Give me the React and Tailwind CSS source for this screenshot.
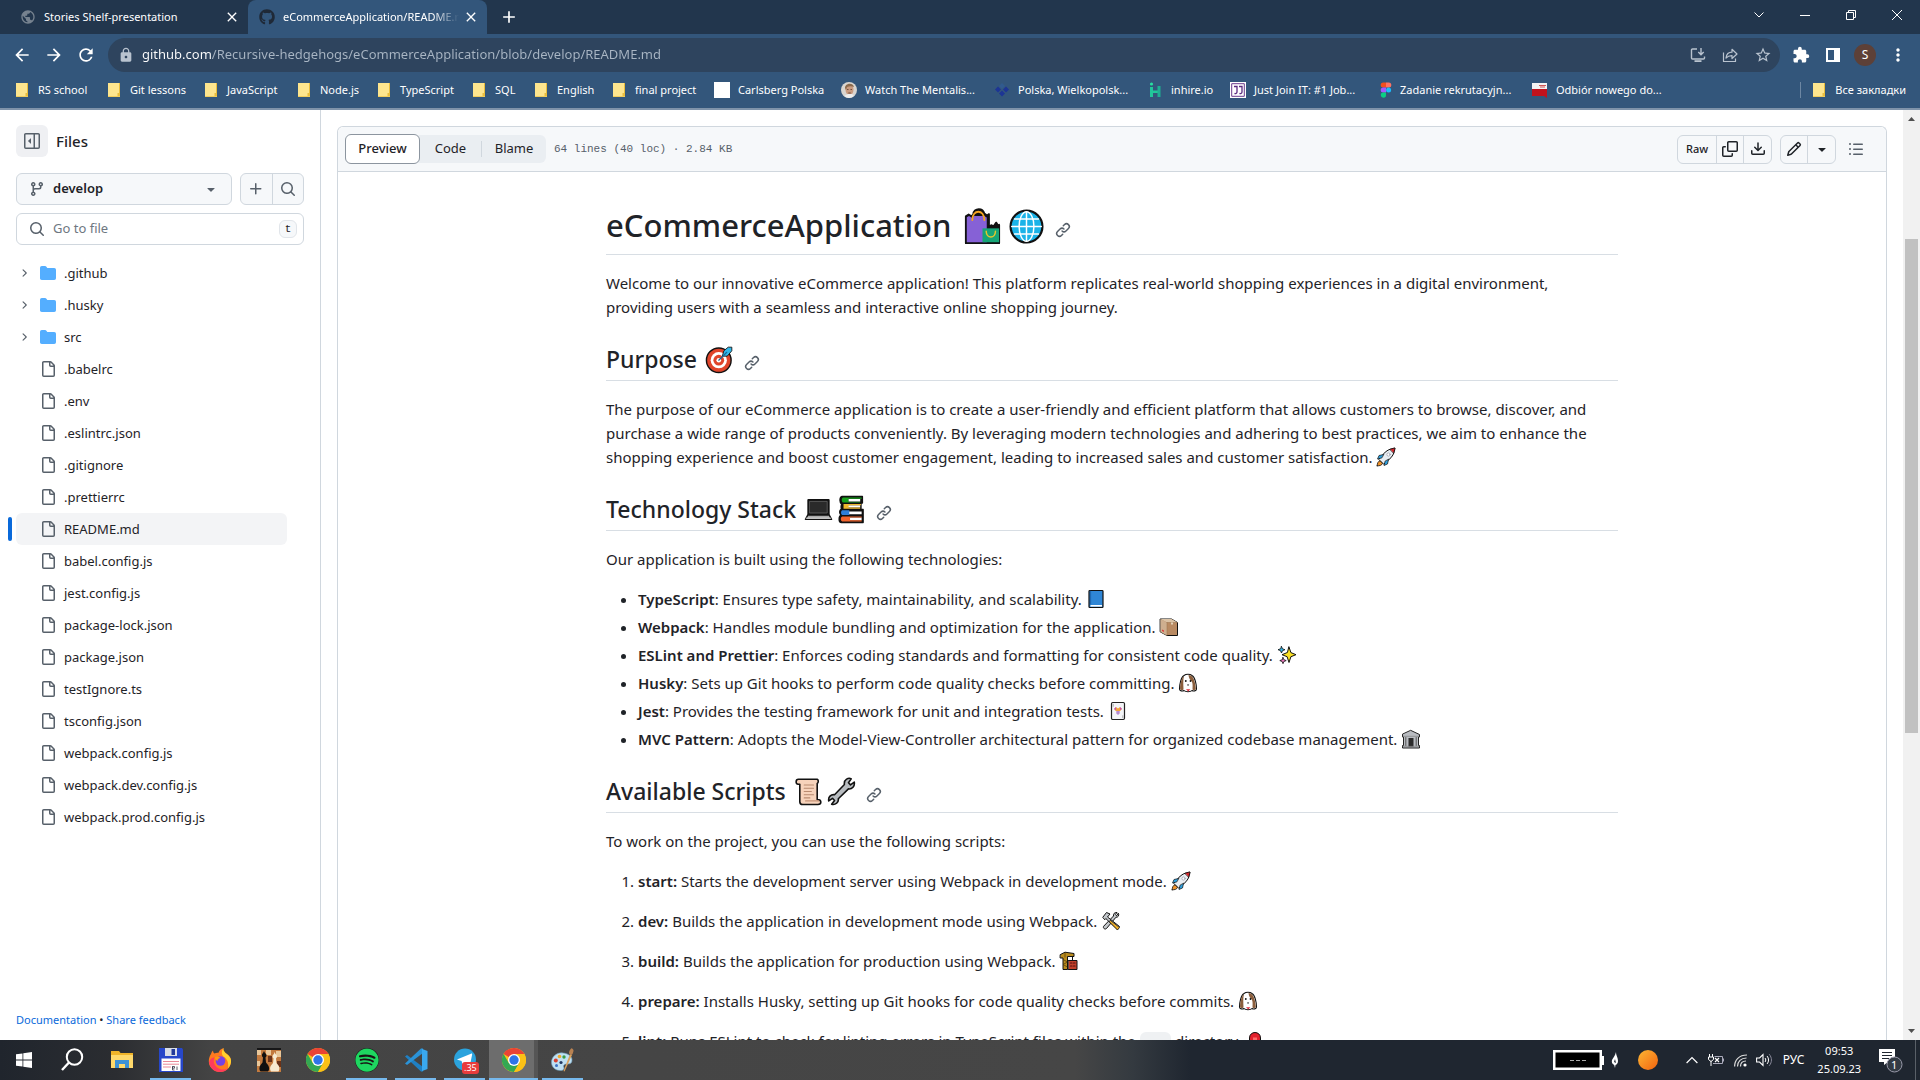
import React from "react";
import { MdArrowBack, MdArrowForward, MdRefresh, MdLock, MdStarBorder, MdExtension, MdMoreVert, MdAdd, MdClose, MdPublic } from "react-icons/md";
import { FaSpotify, FaGithub } from "react-icons/fa";

/* ---------- line icons of the repository pages, on a 16 x 16 grid ---------- */
const octicons = {
  file: "M2 1.750C2 .784 2.784 0 3.750 0h6.586c.464 0 .909.184 1.237.513l2.914 2.914c.329.328.513.773.513 1.237v9.586A1.750 1.750 0 0 1 13.250 16h-9.500A1.750 1.750 0 0 1 2 14.250Zm1.750-.250a.250.250 0 0 0-.250.250v12.500c0 .138.112.250.250.250h9.500a.250.250 0 0 0 .250-.250V6h-2.750A1.750 1.750 0 0 1 9 4.250V1.500Zm6.750.062V4.250c0 .138.112.250.250.250h2.688l-.011-.013-2.914-2.914-.013-.011Z",
  folder: "M1.750 1A1.750 1.750 0 0 0 0 2.750v10.500C0 14.216.784 15 1.750 15h12.500A1.750 1.750 0 0 0 16 13.250v-8.500A1.750 1.750 0 0 0 14.250 3H7.500a.250.250 0 0 1-.2-.1l-.9-1.2C6.070 1.260 5.550 1 5 1H1.750Z",
  branch: "M9.5 3.25a2.25 2.25 0 1 1 3 2.122V6A2.5 2.5 0 0 1 10 8.5H6a1 1 0 0 0-1 1v1.128a2.251 2.251 0 1 1-1.5 0V5.372a2.25 2.25 0 1 1 1.5 0v1.836A2.493 2.493 0 0 1 6 7h4a1 1 0 0 0 1-1v-.628A2.25 2.25 0 0 1 9.5 3.25Zm-6 0a.75.75 0 1 0 1.5 0 .75.75 0 0 0-1.5 0Zm8.25-.75a.75.75 0 1 0 0 1.5.75.75 0 0 0 0-1.5ZM4.25 12a.75.75 0 1 0 0 1.5.75.75 0 0 0 0-1.5Z",
  search: "M10.68 11.74a6 6 0 0 1-7.922-8.982 6 6 0 0 1 8.982 7.922l3.04 3.04a.749.749 0 0 1-.326 1.275.749.749 0 0 1-.734-.215ZM11.5 7a4.499 4.499 0 1 0-8.997 0A4.499 4.499 0 0 0 11.5 7Z",
  plus: "M7.75 2a.75.75 0 0 1 .75.75V7h4.25a.75.75 0 0 1 0 1.5H8.5v4.25a.75.75 0 0 1-1.5 0V8.5H2.75a.75.75 0 0 1 0-1.5H7V2.75A.75.75 0 0 1 7.75 2Z",
  triangle: "m4.427 7.427 3.396 3.396a.25.25 0 0 0 .354 0l3.396-3.396A.25.25 0 0 0 11.396 7H4.604a.25.25 0 0 0-.177.427Z",
  sidebar: "m4.177 7.823 2.396-2.396A.25.25 0 0 1 7 5.604v4.792a.25.25 0 0 1-.427.177L4.177 8.177a.25.25 0 0 1 0-.354ZM0 1.75C0 .784.784 0 1.75 0h12.5C15.216 0 16 .784 16 1.75v12.5A1.75 1.75 0 0 1 14.25 16H1.75A1.75 1.75 0 0 1 0 14.25Zm1.75-.25a.25.25 0 0 0-.25.25v12.5c0 .138.112.25.25.25H9.5v-13Zm12.5 13a.25.25 0 0 0 .25-.25V1.75a.25.25 0 0 0-.25-.25H11v13Z",
  copy: "M0 6.75C0 5.784.784 5 1.75 5h1.5a.75.75 0 0 1 0 1.5h-1.5a.25.25 0 0 0-.25.25v7.5c0 .138.112.25.25.25h7.5a.25.25 0 0 0 .25-.25v-1.5a.75.75 0 0 1 1.5 0v1.5A1.75 1.75 0 0 1 9.25 16h-7.5A1.75 1.75 0 0 1 0 14.25ZM5 1.75C5 .784 5.784 0 6.75 0h7.5C15.216 0 16 .784 16 1.75v7.5A1.75 1.75 0 0 1 14.25 11h-7.5A1.75 1.75 0 0 1 5 9.25Zm1.75-.25a.25.25 0 0 0-.25.25v7.5c0 .138.112.25.25.25h7.5a.25.25 0 0 0 .25-.25v-7.5a.25.25 0 0 0-.25-.25Z",
  download: "M2.75 14A1.75 1.75 0 0 1 1 12.25v-2.5a.75.75 0 0 1 1.5 0v2.5c0 .138.112.25.25.25h10.5a.25.25 0 0 0 .25-.25v-2.5a.75.75 0 0 1 1.5 0v2.5A1.75 1.75 0 0 1 13.25 14ZM7.25 7.689V2a.75.75 0 0 1 1.5 0v5.689l1.97-1.969a.749.749 0 1 1 1.06 1.06l-3.25 3.25a.749.749 0 0 1-1.06 0L4.22 6.78a.749.749 0 1 1 1.06-1.06l1.97 1.969Z",
  pencil: "M11.013 1.427a1.75 1.75 0 0 1 2.474 0l1.086 1.086a1.75 1.75 0 0 1 0 2.474l-8.61 8.61c-.21.21-.47.364-.756.445l-3.251.93a.75.75 0 0 1-.927-.928l.929-3.25c.081-.286.235-.547.445-.758l8.61-8.61Zm.176 4.823L9.75 4.81l-6.286 6.287a.253.253 0 0 0-.064.108l-.558 1.953 1.953-.558a.253.253 0 0 0 .108-.064Zm1.238-3.763a.25.25 0 0 0-.354 0L10.811 3.75l1.439 1.44 1.263-1.263a.25.25 0 0 0 0-.354Z",
  list: "M5.75 2.5h8.5a.75.75 0 0 1 0 1.5h-8.5a.75.75 0 0 1 0-1.5Zm0 5h8.5a.75.75 0 0 1 0 1.5h-8.5a.75.75 0 0 1 0-1.5Zm0 5h8.5a.75.75 0 0 1 0 1.5h-8.5a.75.75 0 0 1 0-1.5ZM2 14a1 1 0 1 1 0-2 1 1 0 0 1 0 2Zm1-6a1 1 0 1 1-2 0 1 1 0 0 1 2 0ZM2 4a1 1 0 1 1 0-2 1 1 0 0 1 0 2Z",
  link: "m7.775 3.275 1.25-1.25a3.5 3.5 0 1 1 4.95 4.95l-2.5 2.5a3.5 3.5 0 0 1-4.95 0 .751.751 0 0 1 .018-1.042.751.751 0 0 1 1.042-.018 1.998 1.998 0 0 0 2.83 0l2.5-2.5a2.002 2.002 0 0 0-2.83-2.83l-1.25 1.25a.751.751 0 0 1-1.042-.018.751.751 0 0 1-.018-1.042Zm-4.69 9.64a1.998 1.998 0 0 0 2.83 0l1.25-1.25a.751.751 0 0 1 1.042.018.751.751 0 0 1 .018 1.042l-1.25 1.25a3.5 3.5 0 1 1-4.95-4.95l2.5-2.5a3.5 3.5 0 0 1 4.95 0 .751.751 0 0 1-.018 1.042.751.751 0 0 1-1.042.018 1.998 1.998 0 0 0-2.83 0l-2.5 2.5a1.998 1.998 0 0 0 0 2.83Z",
  chevron: "M6.22 3.22a.75.75 0 0 1 1.06 0l4.25 4.25a.75.75 0 0 1 0 1.06l-4.25 4.25a.751.751 0 0 1-1.06-1.06L9.94 8 6.22 4.28a.75.75 0 0 1 0-1.06Z",
};

const Oct = ({ name, cls = "h-4 w-4" }) => (
  <svg viewBox="0 0 16 16" className={`shrink-0 ${cls}`} fill="currentColor" aria-hidden="true"><path d={octicons[name]} /></svg>
);

/* ---------- emoji drawings, all on a 20 x 20 grid ---------- */
const emojiShapes = {
  bags: (
    <>
      <path d="M1 19V4.5l1.5-1 1.5 1 1-1C5 1.500 6.500.6 8 .6s2.600.8 3 2.400l1.500 1 1-.7v7l1.200-1 1.300.6 1.400-2 1 1.500.6-.3V19z" fill="#111" stroke="#111" />
      <path d="M1.500 18.500V5l1.200-.7 1.500 1 1.300-1h5.500l1.300.8V18.500z" fill="#8661d6" stroke="none" />
      <path d="M4.500 6.500c0-6 6.500-6 6.500 0" fill="none" stroke="#f5a623" />
      <path d="M10 11h9v7.500h-9z" fill="#16a576" stroke="none" />
      <path d="M12 12.500c0 4.200 5 4.200 5 0" fill="none" stroke="#e6c62c" strokeWidth=".8" />
    </>
  ),
  globe: (
    <>
      <circle cx="10" cy="10" r="8.600" fill="#1ab3e8" stroke="#111" strokeWidth="1.200" />
      <path d="M10 2v16M2 10h16M3.500 6h13M3.500 14h13" fill="none" stroke="#fff" strokeWidth=".8" />
      <ellipse cx="10" cy="10" rx="4" ry="8" fill="none" stroke="#fff" strokeWidth=".8" />
    </>
  ),
  dart: (
    <>
      <circle cx="9.500" cy="10.500" r="8.500" fill="#e0452b" stroke="#111" />
      <circle cx="9.500" cy="10.500" r="5.600" fill="#fff" stroke="none" />
      <circle cx="9.500" cy="10.500" r="3.700" fill="#e0452b" stroke="none" />
      <circle cx="9.500" cy="10.500" r="1.600" fill="#fff" stroke="none" />
      <path d="M12 7.500l1-3.500L16 1.500h2.500V4l-3 3.500z" fill="#31b8ea" stroke="#111" strokeWidth=".6" />
      <path d="M9.500 10.500l5.500-5.500" fill="none" stroke="#18699a" strokeWidth=".8" />
    </>
  ),
  laptop: (
    <>
      <path d="M3 3.500h14v10H3z" fill="#222" stroke="#111" strokeWidth="1.400" />
      <path d="M4 4.400h12v8H4z" fill="#2a2a2a" stroke="#666" strokeWidth=".5" />
      <path d="M2.600 13.800h14.800l1.600 3H1z" fill="#aaa" stroke="#111" />
      <path d="M1.500 16h17" stroke="#eee" strokeWidth=".6" />
    </>
  ),
  books: (
    <>
      <path d="M3.500 1h14v4.500h-1V10h1.500v4.500L18 19H3c-2 0-2-4.500 0-5-1.500-1-1.500-3.500 0-4.300 0-1-.5-2 .3-3.200C1.500 5 1.800 1.500 3.500 1z" fill="#111" stroke="#111" />
      <path d="M4 1.800h13v.8H8v2h8v.6H4c-1-.6-1-2.800 0-3.400z" fill="#16a11d" stroke="none" />
      <path d="M8 2.800h8v1.600H8zM7 7h9v1.700H7zM8 11.400h9v1.800H8zM8 15.600h9v1.800H8z" fill="#fff" stroke="none" />
      <path d="M4.500 6.200h12V7H8v1.700h8v.7H4.500z" fill="#f0b82e" stroke="none" />
      <path d="M3.500 10.500h5v3.300h-5c-1-.6-1-2.700 0-3.300z" fill="#2f7fd8" stroke="none" />
      <path d="M3.500 14.800H17v.8H9v1.800h8v.8H3.500c-1.200-.6-1.200-2.800 0-3.400z" fill="#f2642c" stroke="none" />
    </>
  ),
  rocket: (
    <>
      <path d="M3 12l4-4.500C9.500 4 14 1.500 19 1c-.3 5-3 9.500-6.500 12L8 17z" fill="#e8edf2" stroke="#111" />
      <path d="M14 2.300L19 1l-1.300 5z" fill="#d8262c" stroke="#111" strokeWidth=".6" />
      <path d="M7.500 7.500L3 8.500 1.500 12l4-1zM12.500 12.500l-1 4.500L8 18.500l1-4z" fill="#2b9fdd" stroke="#111" strokeWidth=".7" />
      <circle cx="12.500" cy="7.500" r="1.600" fill="#fff" stroke="#889" strokeWidth=".6" />
      <path d="M1.200 18.800c0-2.500.8-4.500 2.800-5l2.500 2.500c-.5 2-2.800 2.700-5.300 2.500z" fill="#f0932b" stroke="#111" strokeWidth=".8" />
    </>
  ),
  book: (
    <>
      <rect x="3" y="1.500" width="14" height="17" rx=".8" fill="#2f86d6" stroke="#111" strokeWidth="1.200" />
      <path d="M4.500 16h11.500v1.600H4.500z" fill="#fff" stroke="none" />
      <path d="M4.600 2.200v13" stroke="#1d64ae" />
    </>
  ),
  package: (
    <>
      <path d="M1.500 2h11l6 3.500v13H8L1.500 15z" fill="#b98a62" stroke="#111" />
      <path d="M1.500 2h11l6 3.500H8z" fill="#dbc3a6" stroke="none" />
      <path d="M1.500 2L8 5.500V18.500L1.500 15z" fill="#ceaf8f" stroke="none" />
      <path d="M8 5.500h10.500M8 5.500v13" stroke="#96704e" strokeWidth=".5" />
      <path d="M12 5.500h2v2h-2z" fill="#e6d3b9" stroke="none" />
      <path d="M3 12.500l2 1v1.500l-2-1z" fill="#e03a3a" stroke="none" />
    </>
  ),
  sparkles: (
    <>
      <path d="M12 2l1.900 5.600L19 9.700l-5.100 2L12 17.500l-1.900-5.800L5 9.700l5.100-2.100z" fill="#fbe122" stroke="#111" />
      <path d="M4.500 1.500l1 2.300L8 4.700l-2.500 1-1 2.300-1-2.300L1 4.700l2.500-.9z" fill="#35b4e4" stroke="#111" strokeWidth=".8" />
      <path d="M6 12.500l.9 2.200 2.300.9-2.300.9L6 18.700l-.9-2.200-2.300-.9 2.300-.9z" fill="#ec77bd" stroke="#111" strokeWidth=".8" />
    </>
  ),
  dog: (
    <>
      <path d="M6 2.500c2-1.600 6-1.600 8 0 3 1.500 4.500 9 4.500 13.500 0 2-3 2.500-4.500 1.500-1.500 1.700-6.500 1.700-8 0-1.500 1-4.500.5-4.500-1.500C1.500 11.500 3 4 6 2.500z" fill="#fff" stroke="#111" strokeWidth="1.100" />
      <path d="M6 3C3.500 5 2 11 2.100 16c.5 1.300 2.600 1.300 3.400.5C5.300 11 5 7 6 3zM10.500 2c4 0 6.500 4 7.300 14-.5 1.300-2.600 1.300-3.300.5.2-4 .3-6-.7-8-1.600-1-3-3.500-3.300-6.500z" fill="#8b5e3c" stroke="none" />
      <circle cx="7.800" cy="8" r=".9" fill="#111" stroke="none" />
      <circle cx="12.500" cy="8" r=".9" fill="#111" stroke="none" />
      <path d="M9 11.500h2.200L10 13z" fill="#111" stroke="none" />
      <path d="M8 16.300h4.300l-2 2.200z" fill="#e02a3a" stroke="none" />
    </>
  ),
  joker: (
    <>
      <rect x="3.500" y="1.500" width="13" height="17" rx="1.200" fill="#f4f5f8" stroke="#222" strokeWidth="1.200" />
      <path d="M6 8l2-2 2 1.500L12 6l2 2-1.800 2H7.800z" fill="#f3a33c" stroke="none" />
      <path d="M6 8l2-2v3zM12 6l2 2-2 1z" fill="#c34bb4" stroke="none" />
      <path d="M8.300 10h3.400v2.500L10 14l-1.700-1.500z" fill="#b58ad0" stroke="none" />
      <path d="M5.200 3.300v2M14.800 14.700v2" stroke="#999" strokeWidth=".8" />
    </>
  ),
  bank: (
    <>
      <path d="M10 1.500l8.500 4V8h-1v8.500h1V19h-17v-2.500h1V8h-1V5.500z" fill="#b9bcc1" stroke="#222" />
      <path d="M7.500 9h5v8.500h-5z" fill="#2b2b2b" stroke="none" />
      <path d="M4.800 8.500v8M15.200 8.500v8" stroke="#555" strokeWidth="1" />
      <path d="M2 7.300h16M2 17.300h16" stroke="#777" strokeWidth=".6" />
    </>
  ),
  scroll: (
    <>
      <path d="M3 1.500h13c1 .5 1 2.500 0 3v11c1.500 0 2.500.5 2.500 1.800S17.500 19 16.500 19H6c-1.500 0-2-1-2-2V5H2.800C1 5 1 1.500 3 1.500z" fill="#f7d3bb" stroke="#111" strokeWidth="1.100" />
      <path d="M7 5.500h6.500M7 7.800h6.500M7 10h5M7 12.200h6.500M7 14.400h4" stroke="#b98b70" strokeWidth=".7" />
      <path d="M8 16.500h9" stroke="#c69377" strokeWidth=".9" />
    </>
  ),
  wrench: (
    <path d="M13.500 1.500c1-.7 2.500-.7 3.200-.2L14.800 4l1.400 1.400 2.600-1.900c.5 3-1.500 5-4 4.700l-7 6.800c.4 2.500-2 4.500-4.600 3.800l2-2.600L3.800 14.700 1.200 16.500c-.5-2.700 1.500-4.600 4-4.300l6.800-7c-.2-1.400.3-2.900 1.500-3.700z" fill="#b8bcc0" stroke="#111" strokeWidth="1.100" />
  ),
  tools: (
    <>
      <path d="M17.500 2.500c1 2-.5 4-2.500 3.700L5.500 17.500c-1.500 1.500-4-.5-2.800-2.300L12.500 5c-.5-2 1-3.800 3.500-3.500l-1.700 2 1 1z" fill="#c4c8cc" stroke="#111" />
      <path d="M2 6l3.500-4.500L9 3 6.500 6l12 9.500-2.300 2.800L4.800 7.500 4 8.500z" fill="#c4c8cc" stroke="#111" />
      <path d="M9.500 9.500l9 7-2 2.500-8-8z" fill="#f0b02a" stroke="#111" strokeWidth=".8" />
    </>
  ),
  crane: (
    <>
      <path d="M1.500 3.500L6 1.200l9 1.300v3H8.500v13H4V7H1.500z" fill="#b98b1d" stroke="#111" />
      <path d="M4 8.500l4.500 2.500L4 13.500 8.500 16M6 2v4" fill="none" stroke="#4e3808" strokeWidth=".7" />
      <path d="M13.500 5.500v4" stroke="#111" />
      <path d="M9.500 9.500h8.500v9H9.500z" fill="#c2402a" stroke="#111" />
      <path d="M11.500 12h1.500M14.500 12H16M11.500 15h1.500M14.500 15H16" stroke="#511" strokeWidth="1.200" />
    </>
  ),
  siren: (
    <>
      <path d="M4.500 15V7c0-7.300 11-7.300 11 0v8z" fill="#e3202c" stroke="#111" />
      <path d="M8 6.500h4V13H8z" fill="#fb6a6a" stroke="none" />
      <path d="M2.500 15h15v3.500h-15z" fill="#555" stroke="#111" />
    </>
  ),
};

function Emoji({ name, size = "text" }) {
  const cls =
    size === "h1" ? "mt-1 h-[37px] w-[37px]"
    : size === "h2" ? "mt-0.5 h-[29px] w-[29px]"
    : "h-5 w-5 align-[-4px]";
  return (
    <svg viewBox="0 0 20 20" className={`inline-block ${cls}`} strokeLinejoin="round" strokeLinecap="round" aria-hidden="true">
      {emojiShapes[name]}
    </svg>
  );
}

/* ---------- browser chrome ---------- */
function FolderMark() {
  return (
    <svg viewBox="0 0 12 14" className="h-3.5 w-3 shrink-0" aria-hidden="true">
      <path d="M0 0h12v14H0z" fill="#fde58e" />
      <path d="M11 0h1v14H9.500v-4H11z" fill="#e9bd3d" />
      <path d="M0 13h12v1H0z" fill="#f1cd5c" />
    </svg>
  );
}

const Blank = () => <span className="block h-4 w-4 bg-white" />;
const Face = () => (
  <svg viewBox="0 0 16 16" className="h-4 w-4" aria-hidden="true">
    <circle cx="8" cy="8" r="8" fill="#d9d5d0" />
    <ellipse cx="8.500" cy="7.500" rx="4" ry="5.500" fill="#c99b80" />
    <path d="M4 6c0-5 8-6 9-1-2-1-5-1-7 0l-1 3z" fill="#8a6a4d" />
    <path d="M6 7.500h1.500M9.500 7.500H11M7.300 11h2.500" stroke="#5d3b2c" strokeWidth=".8" />
    <path d="M3 14l4-2h4l2 2a8 8 0 0 1-10 0z" fill="#eee" />
  </svg>
);
const Diamonds = () => (
  <svg viewBox="0 0 16 16" className="h-4 w-4" aria-hidden="true">
    <path d="M8 1l3 3-3 3-3-3z" fill="#315a8e" />
    <path d="M4 4.500l3 3-3 3-3-3zM12 4.500l3 3-3 3-3-3zM8 8.500l3 3-3 3-3-3z" fill="#1d3595" />
  </svg>
);
const InHire = () => (
  <svg viewBox="0 0 16 16" className="h-4 w-4" aria-hidden="true">
    <circle cx="4.500" cy="2" r="1.600" fill="#27e0a0" />
    <path d="M3 5h3v10H3zM6 8.500h5v2.500H6z" fill="#21c79a" />
    <path d="M10.500 4h3v11h-3z" fill="#1fae93" />
  </svg>
);
const JustJoin = () => (
  <svg viewBox="0 0 16 16" className="h-4 w-4" aria-hidden="true">
    <path d="M0 0h16v16H0z" fill="#fff" />
    <path d="M1.700 1.700h12.600v12.600H1.700z" fill="none" stroke="#6a3a8c" />
    <path d="M4 4.500h3v5.500c0 1.500-1.500 1.800-2.500 1.300M9 4.500h3v5.500c0 1.500-1.500 1.800-2.500 1.300" fill="none" stroke="#5b2a80" strokeWidth="1.300" />
  </svg>
);
const Figma = () => (
  <svg viewBox="0 0 12 16" className="h-4 w-3" aria-hidden="true">
    <path d="M3.200.5H6v5H3.200a2.500 2.500 0 0 1 0-5z" fill="#f24e1e" />
    <path d="M6 .5h2.800a2.500 2.500 0 0 1 0 5H6z" fill="#ff7262" />
    <path d="M3.200 5.500H6v5H3.200a2.500 2.500 0 0 1 0-5z" fill="#a259ff" />
    <circle cx="8.600" cy="8" r="2.500" fill="#1abcfe" />
    <path d="M3.200 10.500H6V13a2.600 2.600 0 1 1-2.800-2.500z" fill="#0acf83" />
  </svg>
);
const RedFlag = () => (
  <svg viewBox="0 0 16 16" className="h-4 w-4" aria-hidden="true">
    <path d="M0 1h15v7H0z" fill="#f4f2f2" />
    <path d="M0 7h15v9l-3-2H0z" fill="#c1121c" />
    <path d="M7 3.500h7M8 5h5" stroke="#c44" strokeWidth=".9" />
  </svg>
);

const bookmarks = [
  { label: "RS school", w: "w-[92px]" },
  { label: "Git lessons", w: "w-[97px]" },
  { label: "JavaScript", w: "w-[93px]" },
  { label: "Node.js", w: "w-[80px]" },
  { label: "TypeScript", w: "w-[95px]" },
  { label: "SQL", w: "w-[62px]" },
  { label: "English", w: "w-[78px]" },
  { label: "final project", w: "w-[101px]" },
  { label: "Carlsberg Polska", w: "w-[127px]", icon: <Blank /> },
  { label: "Watch The Mentalis...", w: "w-[153px]", icon: <Face /> },
  { label: "Polska, Wielkopolsk...", w: "w-[153px]", icon: <Diamonds /> },
  { label: "inhire.io", w: "w-[83px]", icon: <InHire /> },
  { label: "Just Join IT: #1 Job...", w: "w-[150px]", icon: <JustJoin /> },
  { label: "Zadanie rekrutacyjn...", w: "w-[152px]", icon: <Figma /> },
  { label: "Odbiór nowego do...", w: "w-[140px]", icon: <RedFlag /> },
];

function TabStrip() {
  return (
    <div className="flex h-[34px] bg-[#22364d] text-[11px]">
      <div className="flex w-[248px] items-center pl-5">
        <MdPublic className="h-4 w-4 text-[#76828f]" aria-hidden="true" />
        <span className="ml-2 flex-1 truncate text-white">Stories Shelf-presentation</span>
        <button aria-label="Close tab" className="mr-2 text-white"><MdClose className="h-4 w-4" /></button>
      </div>
      <div className="flex w-[239px] items-center rounded-t-lg bg-[#33567b] pl-[11px]">
        <FaGithub className="h-4 w-4 shrink-0 text-[#1f2937]" aria-hidden="true" />
        <span className="ml-2 min-w-0 flex-1 overflow-hidden whitespace-nowrap text-white [mask-image:linear-gradient(to_right,black_85%,transparent)]">
          eCommerceApplication/README.md
        </span>
        <button aria-label="Close tab" className="mr-2 ml-1 text-white"><MdClose className="h-4 w-4" /></button>
      </div>
      <button aria-label="New tab" className="ml-3 text-white"><MdAdd className="h-5 w-5" /></button>
      <div className="ml-auto flex items-center pb-1 text-white">
        <button aria-label="Search tabs" className="flex w-[46px] justify-center">
          <svg viewBox="0 0 10 10" className="h-2.5 w-2.5" fill="none" stroke="currentColor"><path d="M.5 2.500L5 7l4.500-4.500" /></svg>
        </button>
        <button aria-label="Minimize" className="flex w-[46px] justify-center">
          <svg viewBox="0 0 10 10" className="h-2.5 w-2.5" fill="none" stroke="currentColor"><path d="M0 5.500h10" /></svg>
        </button>
        <button aria-label="Restore" className="flex w-[46px] justify-center">
          <svg viewBox="0 0 10 10" className="h-2.5 w-2.5" fill="none" stroke="currentColor"><path d="M.5 2.500h7v7h-7zM2.500 2.500v-2h7v7h-2" /></svg>
        </button>
        <button aria-label="Close window" className="flex w-[46px] justify-center">
          <svg viewBox="0 0 10 10" className="h-2.5 w-2.5" fill="none" stroke="currentColor"><path d="M0 0l10 10M10 0L0 10" /></svg>
        </button>
      </div>
    </div>
  );
}

function Toolbar() {
  return (
    <div className="flex h-[42px] items-center bg-[#33567b] px-3 text-white">
      <button aria-label="Back" className="w-8"><MdArrowBack className="h-5 w-5" /></button>
      <button aria-label="Forward" className="w-8"><MdArrowForward className="h-5 w-5" /></button>
      <button aria-label="Reload" className="w-8"><MdRefresh className="h-5 w-5" /></button>
      <div className="flex h-[34px] flex-1 items-center gap-2 rounded-full bg-[#2e445e] pr-2 pl-2.5 text-[#b9c3cf]">
        <MdLock className="h-4 w-4" aria-hidden="true" />
        <input
          aria-label="Address"
          defaultValue="github.com/Recursive-hedgehogs/eCommerceApplication/blob/develop/README.md"
          className="min-w-0 flex-1 bg-linear-to-r from-white from-[69px] to-[#a9b6c4] to-[69px] bg-clip-text text-[13px] text-transparent outline-none"
        />
        <div className="flex items-center gap-4">
          <button aria-label="Install app">
            <svg viewBox="0 0 16 16" className="h-4 w-4" fill="none" stroke="currentColor" strokeWidth="1.400">
              <path d="M7 2H2.500a1 1 0 0 0-1 1v8a1 1 0 0 0 1 1h11a1 1 0 0 0 1-1V9.500M11 1v6.500M8.300 5L11 7.800 13.700 5" />
              <path d="M4.500 13.200h7V15h-7z" fill="currentColor" stroke="none" />
            </svg>
          </button>
          <button aria-label="Share">
            <svg viewBox="0 0 16 16" className="h-4 w-4" fill="none" stroke="currentColor" strokeWidth="1.200" strokeLinejoin="round">
              <path d="M1.500 5.500v9h12v-3M4 11c.5-4 3-5.800 6-5.800V2.300L15 7l-5 4.500V8.600C7.500 8.600 5.500 9.300 4 11z" />
            </svg>
          </button>
          <button aria-label="Bookmark this page"><MdStarBorder className="h-[18px] w-[18px]" /></button>
        </div>
      </div>
      <button aria-label="Extensions" className="ml-3"><MdExtension className="h-[18px] w-[18px]" /></button>
      <button aria-label="Side panel" className="ml-4">
        <svg viewBox="0 0 14 14" className="h-3.5 w-3.5"><path d="M0 0h14v14H0zM2 2v10h6V2z" fill="currentColor" fillRule="evenodd" /></svg>
      </button>
      <button aria-label="Profile" className="ml-3.5 h-[22px] w-[22px] rounded-full bg-[#5d4037] text-[12px]">S</button>
      <button aria-label="Menu" className="ml-3"><MdMoreVert className="h-5 w-5" /></button>
    </div>
  );
}

function Bookmarks() {
  return (
    <nav aria-label="Bookmarks" className="flex h-[34px] items-center border-b-2 border-[#7f93aa] bg-[#33567b] pr-3.5 pb-1 pl-4 text-[11px] text-white">
      {bookmarks.map((b) => (
        <a key={b.label} href="#" className={`flex shrink-0 items-center whitespace-nowrap ${b.w} ${b.icon ? "gap-2" : "gap-2.5"}`}>
          {b.icon || <FolderMark />}
          <span>{b.label}</span>
        </a>
      ))}
      <a href="#" className="ml-auto flex items-center gap-2.5 whitespace-nowrap border-l border-[#6d87a3] pl-3">
        <FolderMark />
        <span>Все закладки</span>
      </a>
    </nav>
  );
}

/* ---------- repository sidebar ---------- */
const tree = [
  ".github", ".husky", "src", ".babelrc", ".env", ".eslintrc.json", ".gitignore", ".prettierrc", "README.md",
  "babel.config.js", "jest.config.js", "package-lock.json", "package.json", "testIgnore.ts", "tsconfig.json",
  "webpack.config.js", "webpack.dev.config.js", "webpack.prod.config.js",
];

function Sidebar() {
  return (
    <aside className="flex w-[321px] shrink-0 flex-col border-r border-[#d0d7de] px-4 pt-[15px] text-[13px] text-[#1f2328]">
      <div className="flex items-center gap-2">
        <button aria-label="Collapse file tree" className="flex h-8 w-8 items-center justify-center rounded-md bg-[#eff0f3] text-[#57606a]">
          <Oct name="sidebar" />
        </button>
        <h2 className="text-[15px] font-medium">Files</h2>
      </div>
      <div className="mt-4 flex gap-2">
        <button className="flex h-8 flex-1 items-center rounded-md border border-[#d0d7de] bg-[#f6f8fa] px-3">
          <Oct name="branch" cls="h-4 w-4 text-[#57606a]" />
          <span className="ml-2 font-semibold">develop</span>
          <Oct name="triangle" cls="ml-auto h-4 w-4 text-[#57606a]" />
        </button>
        <div className="flex h-8 w-16 divide-x divide-[#d0d7de] rounded-md border border-[#d0d7de] bg-[#f6f8fa] text-[#57606a]">
          <button aria-label="Add file" className="flex flex-1 items-center justify-center"><Oct name="plus" /></button>
          <button aria-label="Search this repository" className="flex flex-1 items-center justify-center"><Oct name="search" /></button>
        </div>
      </div>
      <label className="mt-2 flex h-8 items-center gap-2 rounded-md border border-[#d0d7de] pr-1.5 pl-3">
        <Oct name="search" cls="h-4 w-4 text-[#57606a]" />
        <input aria-label="Go to file" placeholder="Go to file" className="min-w-0 flex-1 outline-none placeholder:text-[#6e7781]" />
        <kbd className="flex h-[18px] w-[18px] items-center justify-center rounded-md border border-[#e1e5ea] bg-[#f6f8fa] font-['Liberation_Mono',monospace] text-[11px]">t</kbd>
      </label>
      <ul className="mt-3 mr-[17px]">
        {tree.map((name, i) => (
          <li key={name} className="relative">
            {name === "README.md" && <span className="absolute top-1 -left-2 h-6 w-1 rounded-full bg-[#0969da]" />}
            <a href="#" className={`flex h-8 items-center rounded-md ${name === "README.md" ? "bg-[#f3f4f6]" : ""}`}>
              <span className="flex w-6 items-center text-[#57606a]">
                {i < 3 && <Oct name="chevron" cls="ml-0.5 h-3 w-3" />}
              </span>
              {i < 3 ? <Oct name="folder" cls="h-4 w-4 text-[#54aeff]" /> : <Oct name="file" cls="h-4 w-4 text-[#57606a]" />}
              <span className="ml-2 pt-px">{name}</span>
            </a>
          </li>
        ))}
      </ul>
      <p className="mt-auto pb-3 text-[11px] leading-4 text-[#1f2328]">
        <a href="#" className="text-[#0969da]">Documentation</a> • <a href="#" className="text-[#0969da]">Share feedback</a>
      </p>
    </aside>
  );
}

/* ---------- file view ---------- */
function FileHeader() {
  return (
    <div className="flex h-[45px] shrink-0 items-center rounded-t-md border-b border-[#d0d7de] bg-[#f6f8fa] pr-[22px] pl-[7px] text-[#1f2328]">
      <div className="flex h-7 items-center rounded-md bg-[#eaeef2] text-[13px]">
        <button className="h-[30px] w-[75px] rounded-md border border-[#8c959f] bg-white font-medium">Preview</button>
        <button className="w-[61px]">Code</button>
        <span className="h-4 w-px bg-[#d0d7de]" />
        <button className="w-16">Blame</button>
      </div>
      <span className="ml-2 font-['Liberation_Mono',monospace] text-[11px] text-[#57606a]">64 lines (40 loc) · 2.84 KB</span>
      <div className="ml-auto flex h-[29px] divide-x divide-[#d0d7de] rounded-md border border-[#d0d7de]">
        <button className="w-[39px] text-[11px] font-medium">Raw</button>
        <button aria-label="Copy raw file" className="flex w-[27px] items-center justify-center"><Oct name="copy" /></button>
        <button aria-label="Download raw file" className="flex w-[27px] items-center justify-center"><Oct name="download" /></button>
      </div>
      <div className="ml-2 flex h-[29px] divide-x divide-[#d0d7de] rounded-md border border-[#d0d7de]">
        <button aria-label="Edit this file" className="flex w-[27px] items-center justify-center"><Oct name="pencil" /></button>
        <button aria-label="More edit options" className="flex w-[27px] items-center justify-center"><Oct name="triangle" /></button>
      </div>
      <button aria-label="Outline" className="ml-3 text-[#57606a]"><Oct name="list" /></button>
    </div>
  );
}

const Anchor = ({ cls = "" }) => (
  <a href="#" aria-label="Permalink" className={`inline-block text-[#57606a] ${cls}`}><Oct name="link" /></a>
);

function SectionTitle({ children, emojis }) {
  return (
    <h2 className="mt-6 mb-4 flex h-[38px] items-start border-b border-[#d8dee4] text-[23px] leading-8 font-medium">
      <span>{children}</span>
      <span className="ml-2 flex gap-1">{emojis.map((e) => <Emoji key={e} name={e} size="h2" />)}</span>
      <Anchor cls="mt-3 ml-2.5" />
    </h2>
  );
}

const stack = [
  ["TypeScript", "Ensures type safety, maintainability, and scalability.", "book"],
  ["Webpack", "Handles module bundling and optimization for the application.", "package"],
  ["ESLint and Prettier", "Enforces coding standards and formatting for consistent code quality.", "sparkles"],
  ["Husky", "Sets up Git hooks to perform code quality checks before committing.", "dog"],
  ["Jest", "Provides the testing framework for unit and integration tests.", "joker"],
  ["MVC Pattern", "Adopts the Model-View-Controller architectural pattern for organized codebase management.", "bank"],
];

const scripts = [
  ["start", "Starts the development server using Webpack in development mode.", "rocket"],
  ["dev", "Builds the application in development mode using Webpack.", "tools"],
  ["build", "Builds the application for production using Webpack.", "crane"],
  ["prepare", "Installs Husky, setting up Git hooks for code quality checks before commits.", "dog"],
];

function Readme() {
  return (
    <article className="mx-auto w-full max-w-[1012px] pt-8 text-[15px] leading-6 text-[#1f2328]">
      <h1 className="mb-4 flex h-[51px] items-start border-b border-[#d8dee4] text-[31px] leading-[42px] font-medium">
        <span>eCommerceApplication</span>
        <span className="ml-3 flex gap-[7px]"><Emoji name="bags" size="h1" /><Emoji name="globe" size="h1" /></span>
        <Anchor cls="mt-[18px] ml-2.5" />
      </h1>
      <p>
        Welcome to our innovative eCommerce application! This platform replicates real-world shopping experiences in a digital environment,
        <br />
        providing users with a seamless and interactive online shopping journey.
      </p>
      <SectionTitle emojis={["dart"]}>Purpose</SectionTitle>
      <p>
        The purpose of our eCommerce application is to create a user-friendly and efficient platform that allows customers to browse, discover, and
        <br />
        purchase a wide range of products conveniently. By leveraging modern technologies and adhering to best practices, we aim to enhance the
        <br />
        shopping experience and boost customer engagement, leading to increased sales and customer satisfaction. <Emoji name="rocket" />
      </p>
      <SectionTitle emojis={["laptop", "books"]}>Technology Stack</SectionTitle>
      <p className="mb-4">Our application is built using the following technologies:</p>
      <ul className="list-disc space-y-1 pl-8">
        {stack.map(([name, text, emoji]) => (
          <li key={name} className="h-6"><strong className="font-semibold">{name}</strong>: {text} <Emoji name={emoji} /></li>
        ))}
      </ul>
      <SectionTitle emojis={["scroll", "wrench"]}>Available Scripts</SectionTitle>
      <p className="mb-4">To work on the project, you can use the following scripts:</p>
      <ol className="list-decimal space-y-4 pl-8">
        {scripts.map(([name, text, emoji]) => (
          <li key={name} className="h-6"><strong className="font-semibold">{name}:</strong> {text} <Emoji name={emoji} /></li>
        ))}
        <li className="h-6">
          <strong className="font-semibold">lint:</strong> Runs ESLint to check for linting errors in TypeScript files within the{" "}
          <code className="rounded-md bg-[#eff1f3] px-1 py-1 font-['Liberation_Mono',monospace] text-[13px]">src</code> directory. <Emoji name="siren" />
        </li>
      </ol>
    </article>
  );
}

function Scrollbar() {
  return (
    <div className="flex w-[17px] shrink-0 flex-col bg-[#f1f1f1]" aria-hidden="true">
      <svg viewBox="0 0 17 17" className="h-[17px] w-[17px]"><path d="M5 11l3.500-4L12 11z" fill="#505050" /></svg>
      <div className="grow-[112]" />
      <div className="mx-0.5 grow-[494] bg-[#c1c1c1]" />
      <div className="grow-[290]" />
      <svg viewBox="0 0 17 17" className="h-[17px] w-[17px]"><path d="M5 6l3.500 4L12 6z" fill="#505050" /></svg>
    </div>
  );
}

/* ---------- taskbar ---------- */
const Svg = ({ children, box = "0 0 24 24", cls = "h-6 w-6" }) => <svg viewBox={box} className={cls} aria-hidden="true">{children}</svg>;

const ChromeLogo = () => (
  <Svg>
    <circle cx="12" cy="12" r="12" fill="#fbc116" />
    <path d="M12 12L1.600 6A12 12 0 0 1 22.400 6H12z" fill="#ea4335" />
    <path d="M1.600 6A12 12 0 0 0 12 24l5.200-9-5.200-3-5.200 3z" fill="#34a853" />
    <path d="M12 24a12 12 0 0 0 10.400-18H12l5.200 9z" fill="#fbc116" />
    <circle cx="12" cy="12" r="6" fill="#fff" />
    <circle cx="12" cy="12" r="4.700" fill="#2f74e8" />
  </Svg>
);

const apps = [
  { name: "File Explorer", icon: (
    <Svg>
      <path d="M1 3h8l1.500 2H23v15H1z" fill="#f0b429" />
      <path d="M1 7h22v13H1z" fill="#ffd96b" />
      <path d="M5 20v-8h14v8h-4v-4H9v4z" fill="#3d92d6" />
    </Svg>
  ) },
  { name: "Total Commander", open: true, icon: (
    <Svg>
      <path d="M0 0h23l1 1.500V24H0z" fill="#2747c9" />
      <path d="M6 0h12v8H6z" fill="#d8dde6" /><path d="M12.500 1h3.500v6h-3.500z" fill="#223a99" />
      <path d="M2.500 10.500h19V23h-19z" fill="#fff" />
      <path d="M4 13.500h16M4 16.200h16M4 19h8" stroke="#e77a8c" strokeWidth=".9" />
      <path d="M13.500 18.500h2v1.700h-2zv3.500h2M18 18.500v3.500" fill="none" stroke="#334" strokeWidth=".8" />
    </Svg>
  ) },
  { name: "Firefox", icon: (
    <Svg>
      <path d="M3 6c.5-1.500 1-2.500 2-3.500 0 1.500.7 2.500 1.500 3 1-.8 2.500-1 4-.8C11 3 12.500 1 15.500 0c-.5 2 .5 3.500 2 5 3 1.500 5.800 4.500 5.500 9-.4 5.500-5 10-11 10S.8 19 .8 13.500C.8 10.500 1.600 8 3 6z" fill="#ff7a1f" />
      <path d="M15.500 0c-.5 2 .5 3.500 2 5 3.500 2.500 6 5 5.500 9-.3 2.500-1.500 4.500-3 6.500 1-6-1-9.500-4-11.500-2.500-1.800-3-6-.5-9z" fill="#ffd02e" />
      <path d="M1 14.500C2 20 6.500 24 12 24c3.500 0 6.500-1.500 8.500-4-3 2-8 2.500-12-1-3-3-3.500-7-1.500-10-3 .5-5.500 2.500-6 5.500z" fill="#ff3b5c" />
      <circle cx="12.500" cy="13" r="4.800" fill="#7542e5" />
      <path d="M6.500 9.500c2-1.500 4-1.500 6 .5-2 .3-3 1.200-3 3-1.500-1-2.500-2-3-3.500z" fill="#ff980e" />
    </Svg>
  ) },
  { name: "Chess", icon: (
    <Svg>
      <path d="M0 0h24v24H0z" fill="#c37a3e" />
      <path d="M0 2h4v5H0zM9 2h5v5H9zM19 3h5v6h-5zM0 13h3v5H0z" fill="#e9c79a" />
      <path d="M11 8h4v6h-4zM20 13h4v6h-4z" fill="#6a3218" />
      <path d="M0 0h24v2H0z" fill="#171718" />
      <path d="M7 3l1 2c2 1 2 3.500.5 4.500L9 14.500l2 2.500c1.500 2 1.500 5 0 6.500H3.500C2 22 2 19 3.500 17l2-2.500.500-5C4.500 8.500 4.500 6 6 5z" fill="#101010" />
      <path d="M17.500 4l1 2c2 1 2 3.500.5 4.500l.5 4.500 2 2.500c1.500 2 1 4.500 0 6h-7.500c-1-1.500-1.500-4 0-6l2-2.500.5-4.500c-1.500-1-1.500-3.500.5-4.500z" fill="#f7ead0" />
    </Svg>
  ) },
  { name: "Google Chrome", icon: <ChromeLogo /> },
  { name: "Spotify", open: true, icon: <span className="flex h-6 w-6 items-center justify-center rounded-full bg-[#191414]"><FaSpotify className="h-6 w-6 text-[#1ed760]" /></span> },
  { name: "Visual Studio Code", open: true, icon: (
    <Svg>
      <path d="M1 8.500l2-1.500L19 19v4.500h-2z" fill="#1f80c4" />
      <path d="M1 15.500L3 17 19 5V.5h-2z" fill="#2a93d8" />
      <path d="M17 .5L23.500 3v18L17 23.500c.8-.3 1-.8 1-1.500V2c0-.7-.2-1.200-1-1.500z" fill="#3aa8ee" />
    </Svg>
  ) },
  { name: "Telegram", open: true, badge: ".35", icon: (
    <Svg>
      <circle cx="12" cy="11.500" r="11" fill="#2ba3dd" />
      <path d="M4.500 11.200L18 5.700c.8-.3 1.300.1 1.100 1l-2.200 10.700c-.2.800-.8 1-1.400.6l-3.400-2.500-1.700 1.600c-.4.400-.8.200-.9-.3l-.9-3.800-4-1.200c-.600-.2-.600-.400-.1-.6z" fill="#fff" />
    </Svg>
  ) },
  { name: "Google Chrome window", open: true, active: true, icon: <ChromeLogo /> },
  { name: "Paint", open: true, icon: (
    <Svg>
      <path d="M12 5C6 4 0 9 .5 15c.4 4.500 4 7.500 9 7.500 3.500 0 4-2 3-4 0-2 1.500-2.500 4-2.500 3 0 4.500-1 4.500-4C21 8 17 5.500 12 5z" fill="#bfe0f2" stroke="#6f9fbd" strokeWidth=".6" />
      <circle cx="4.800" cy="12.500" r="2" fill="#d8402e" /><circle cx="8.500" cy="8.500" r="1.800" fill="#f0a92a" />
      <circle cx="5.500" cy="17.500" r="1.500" fill="#3b72c4" /><circle cx="10" cy="14.500" r="1.600" fill="#223a63" /><circle cx="13" cy="9" r="1.700" fill="#3a9d45" />
      <path d="M19 6l2 1-7.500 16.500-1-.5z" fill="#d9a15c" />
      <path d="M18 5.500C18 3 19 1 21 0c0 1 2 1.500 1.500 3-.3 1.500-.8 3-1.800 4z" fill="#b98252" />
    </Svg>
  ) },
];

function Taskbar() {
  return (
    <footer className="flex h-10 shrink-0 bg-[linear-gradient(to_right,#20252d_0%,#2b2d31_6%,#444444_11%,#464646_56%,#343a40_59%,#1f2630_62%,#1f2630_100%)] text-white">
      <button aria-label="Start" className="flex w-12 items-center justify-center">
        <Svg box="0 0 16 16" cls="h-4 w-4"><path d="M0 2.300l6.500-.9v6.200H0zM7.300 1.300L16 0v7.600H7.300zM0 8.400h6.500v6.200L0 13.700zM7.300 8.400H16V16l-8.700-1.300z" fill="#fff" /></Svg>
      </button>
      <button aria-label="Search" className="flex w-[49px] items-center justify-center">
        <Svg><circle cx="13.500" cy="9" r="7.700" fill="none" stroke="#fff" strokeWidth="2" /><path d="M8 14.500L1 22" stroke="#fff" strokeWidth="2.400" /></Svg>
      </button>
      {apps.map((a) => (
        <button
          key={a.name}
          aria-label={a.name}
          className={`relative flex w-[49px] items-center justify-center ${a.active ? "bg-[#6d6d6d] shadow-[inset_-4px_0_#555555]" : ""}`}
        >
          {a.icon}
          {a.badge && <span className="absolute top-[22px] left-[22px] rounded-[3px] bg-[#e83c3c] px-0.5 text-[9px] leading-3">{a.badge}</span>}
          {a.open && <span className={`absolute bottom-0 h-0.5 bg-[#76b9ed] ${a.active ? "inset-x-0" : "inset-x-1"}`} />}
        </button>
      ))}
      <div className="ml-auto flex items-center">
        <Svg box="0 0 52 20" cls="h-5 w-[52px]">
          <path d="M0 0h49v6h2v9h-2v5H0z" fill="#fff" /><path d="M2.500 2.500h44v15h-44z" fill="#000" />
          <path d="M17 10.500h4M23 10.500h4M29 10.500h4" stroke="#aaa" />
        </Svg>
        <Svg box="0 0 8 16" cls="ml-1.5 h-4 w-2"><path d="M5 0c0 4 2 5 2 9 0 2-1 3.500-2.500 4L4 16l-.8-3C1 12 .5 10 1 8c1-2 3-4 4-8zM4 7l-1 3 2 1z" fill="#fff" fillRule="evenodd" /></Svg>
        <span className="ml-[19px] h-5 w-5 rounded-full bg-linear-to-br from-[#fbb533] to-[#f1610c]" />
        <button aria-label="Show hidden icons" className="ml-7">
          <Svg box="0 0 12 8" cls="h-2 w-3"><path d="M.6 7L6 1.500 11.400 7" fill="none" stroke="#fff" strokeWidth="1.200" /></Svg>
        </button>
        <Svg box="0 0 16 12" cls="ml-2.5 h-3 w-4">
          <path d="M1.500 0v3M4.500 0v3M0.500 3h5v2.500L3 7.500.5 5.500zM3 7v5" fill="none" stroke="#fff" />
          <path d="M6.500 2.500h8v7H5M15.500 4.500v3" fill="none" stroke="#aab" /><path d="M7 4l4 4M11 4L7 8" stroke="#fff" strokeWidth="1.200" />
        </Svg>
        <Svg box="0 0 14 14" cls="ml-2.5 h-3.5 w-3.5">
          <circle cx="11" cy="12" r="1.600" fill="#fff" />
          <path d="M6.500 13.500C6.500 10 8.500 8 12 8M3.500 13.500C3.500 8.500 7 5 12.500 5M.6 13.500C.6 7 5 2 13 2" fill="none" stroke="#ddd" strokeWidth="1.200" />
        </Svg>
        <Svg box="0 0 16 14" cls="ml-2 h-3.5 w-4">
          <path d="M.6 5h3L7 1.500v11L3.600 9h-3z" fill="none" stroke="#fff" strokeWidth="1.100" />
          <path d="M9 5c1 1.200 1 2.800 0 4M11 3c2 2.400 2 5.600 0 8" fill="none" stroke="#fff" /><path d="M13.200 1.200c3 3.600 3 8 0 11.600" fill="none" stroke="#889" />
        </Svg>
        <span className="ml-[11px] text-[12px]">РУС</span>
        <div className="ml-[13px] text-center text-[11px] leading-[18px]">
          <div>09:53</div>
          <div>25.09.23</div>
        </div>
        <button aria-label="Notifications" className="relative ml-[18px]">
          <Svg box="0 0 24 26" cls="h-[26px] w-6">
            <path d="M0 2h16v13H9l-4 3v-3H0z" fill="#fff" /><path d="M3 5.500h10M3 8.500h10M3 11.500h7" stroke="#1f2630" />
            <circle cx="15.500" cy="17.500" r="7.500" fill="#333b44" stroke="#99a" />
          </Svg>
          <span className="absolute top-[11px] left-[12px] text-[11px] leading-[14px]">1</span>
        </button>
        <span className="ml-3 h-10 w-[5px] border-l border-[#5a6068]" />
      </div>
    </footer>
  );
}

export default function App() {
  return (
    <div className="flex h-screen flex-col overflow-hidden bg-white font-['Noto_Sans',sans-serif]">
      <header className="shrink-0">
        <TabStrip />
        <Toolbar />
        <Bookmarks />
      </header>
      <div className="flex min-h-0 flex-1">
        <Sidebar />
        <main className="min-w-0 flex-1 overflow-hidden px-4 pt-4">
          <section className="flex h-full flex-col rounded-t-md border border-b-0 border-[#d0d7de]">
            <FileHeader />
            <Readme />
          </section>
        </main>
        <Scrollbar />
      </div>
      <Taskbar />
    </div>
  );
}
